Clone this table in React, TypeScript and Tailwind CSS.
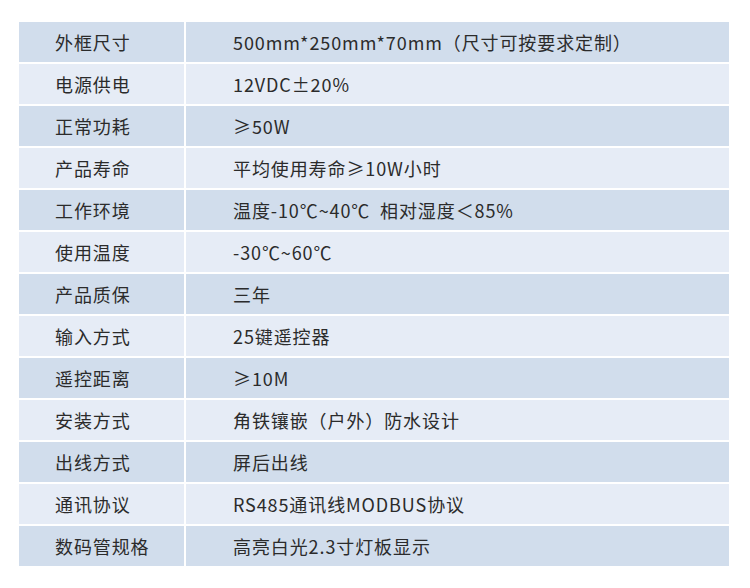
const specs: [string, string][] = [
  ['外框尺寸', '500mm*250mm*70mm（尺寸可按要求定制）'],
  ['电源供电', '12VDC±20%'],
  ['正常功耗', '≥50W'],
  ['产品寿命', '平均使用寿命≥10W小时'],
  ['工作环境', '温度-10℃~40℃  相对湿度＜85%'],
  ['使用温度', '-30℃~60℃'],
  ['产品质保', '三年'],
  ['输入方式', '25键遥控器'],
  ['遥控距离', '≥10M'],
  ['安装方式', '角铁镶嵌（户外）防水设计'],
  ['出线方式', '屏后出线'],
  ['通讯协议', 'RS485通讯线MODBUS协议'],
  ['数码管规格', '高亮白光2.3寸灯板显示'],
];

export default function App() {
  return (
    <div
      className="w-[750px] h-[588px] bg-white pt-[22px] pl-[19px]"
      style={{ fontFamily: '"Noto Sans CJK SC", "Noto Sans", sans-serif' }}
    >
      <div className="w-[710px] grid grid-cols-[165px_543px] gap-x-[2px] gap-y-[2px] text-[18px] tracking-[0.9px] text-[#2b2b2b]">
        {specs.map(([label, value], i) => {
          const bg = i % 2 === 0 ? 'bg-[#d1ddec]' : 'bg-[#e6ecf6]';
          return (
            <div key={label} className="contents">
              <div className={`${bg} h-[40px] flex items-center pl-[36px] whitespace-nowrap`}>{label}</div>
              <div className={`${bg} h-[40px] flex items-center pl-[47px] whitespace-pre`}>{value}</div>
            </div>
          );
        })}
      </div>
    </div>
  );
}
